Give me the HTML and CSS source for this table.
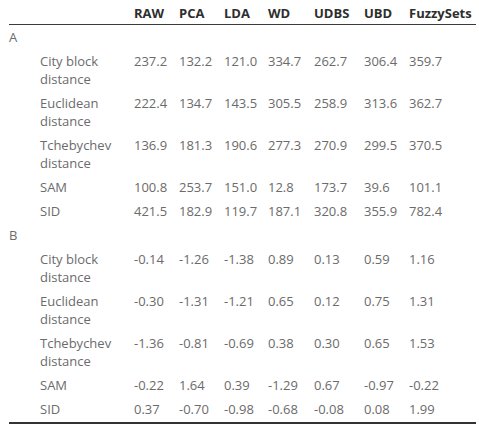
FILE: index.html
```html
<!DOCTYPE html>
<html lang="en">
<head>
  <meta charset="UTF-8" />
  <title>Distance results</title>
  <link rel="stylesheet" href="styles.css">
</head>
<body>
  <div class="table-wrap">
    <table class="results">
      <colgroup>
        <col class="c-label">
        <col class="c-45">
        <col class="c-45">
        <col class="c-44">
        <col class="c-46">
        <col class="c-50">
        <col class="c-45">
        <col class="c-last">
      </colgroup>
      <thead>
        <tr>
          <th></th>
          <th>RAW</th>
          <th>PCA</th>
          <th>LDA</th>
          <th>WD</th>
          <th>UDBS</th>
          <th>UBD</th>
          <th>FuzzySets</th>
        </tr>
      </thead>
      <tbody>
        <tr class="group"><td colspan="8">A</td></tr>
        <tr>
          <td class="label">City block distance</td>
          <td>237.2</td><td>132.2</td><td>121.0</td><td>334.7</td><td>262.7</td><td>306.4</td><td>359.7</td>
        </tr>
        <tr>
          <td class="label">Euclidean distance</td>
          <td>222.4</td><td>134.7</td><td>143.5</td><td>305.5</td><td>258.9</td><td>313.6</td><td>362.7</td>
        </tr>
        <tr>
          <td class="label">Tchebychev distance</td>
          <td>136.9</td><td>181.3</td><td>190.6</td><td>277.3</td><td>270.9</td><td>299.5</td><td>370.5</td>
        </tr>
        <tr>
          <td class="label">SAM</td>
          <td>100.8</td><td>253.7</td><td>151.0</td><td>12.8</td><td>173.7</td><td>39.6</td><td>101.1</td>
        </tr>
        <tr>
          <td class="label">SID</td>
          <td>421.5</td><td>182.9</td><td>119.7</td><td>187.1</td><td>320.8</td><td>355.9</td><td>782.4</td>
        </tr>
        <tr class="group"><td colspan="8">B</td></tr>
        <tr>
          <td class="label">City block distance</td>
          <td>-0.14</td><td>-1.26</td><td>-1.38</td><td>0.89</td><td>0.13</td><td>0.59</td><td>1.16</td>
        </tr>
        <tr>
          <td class="label">Euclidean distance</td>
          <td>-0.30</td><td>-1.31</td><td>-1.21</td><td>0.65</td><td>0.12</td><td>0.75</td><td>1.31</td>
        </tr>
        <tr>
          <td class="label">Tchebychev distance</td>
          <td>-1.36</td><td>-0.81</td><td>-0.69</td><td>0.38</td><td>0.30</td><td>0.65</td><td>1.53</td>
        </tr>
        <tr>
          <td class="label">SAM</td>
          <td>-0.22</td><td>1.64</td><td>0.39</td><td>-1.29</td><td>0.67</td><td>-0.97</td><td>-0.22</td>
        </tr>
        <tr class="last">
          <td class="label">SID</td>
          <td>0.37</td><td>-0.70</td><td>-0.98</td><td>-0.68</td><td>-0.08</td><td>0.08</td><td>1.99</td>
        </tr>
      </tbody>
    </table>
  </div>
</body>
</html>
```

FILE: styles.css
```css
body {
  margin: 0;
  padding: 0;
  background: #fff;
  font-family: 'Open Sans', sans-serif;
  font-size: 13px;
  color: #6b6b6b;
}

.table-wrap {
  padding-left: 9px;
}

.results {
  width: 467px;
  table-layout: fixed;
  border-collapse: collapse;
}

.c-label { width: 125px; }
.c-45 { width: 45px; }
.c-44 { width: 44px; }
.c-46 { width: 46px; }
.c-50 { width: 50px; }
.c-last { width: 67px; }

.results th,
.results td {
  padding: 3px 0;
  line-height: 18px;
  text-align: left;
  vertical-align: top;
  white-space: nowrap;
}

.results th {
  padding: 4px 0 2px;
  font-weight: 700;
  color: #2e2e2e;
  border-bottom: 1px solid #3a3a3a;
}

.results td.label {
  padding-left: 31px;
  padding-right: 10px;
  white-space: normal;
}

.results .last td {
  padding-bottom: 4px;
  border-bottom: 2px solid #333;
}
```
